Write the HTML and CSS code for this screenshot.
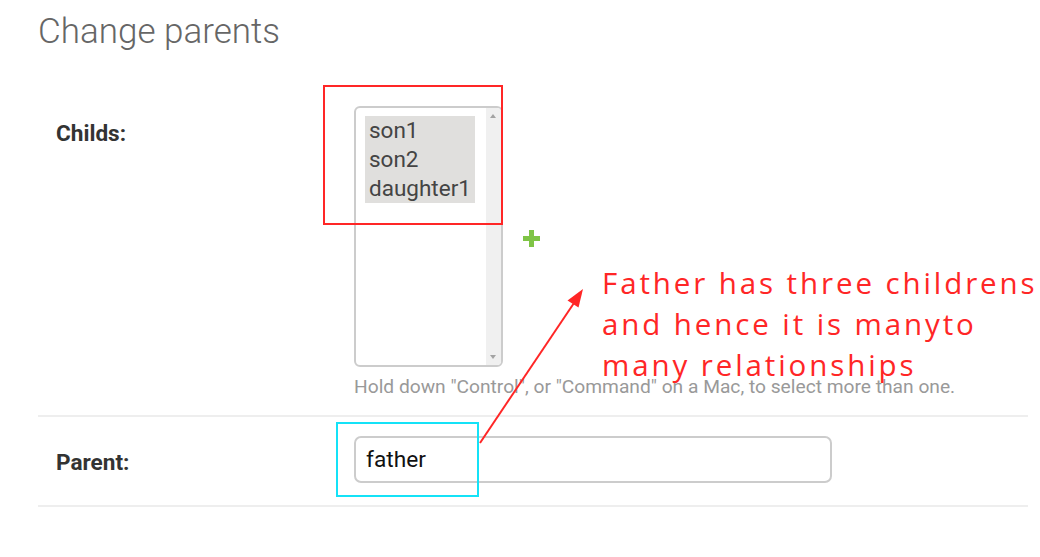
FILE: index.html
```html
<!DOCTYPE html>
<html>
<head>
<meta charset="utf-8">
<title>Change parents</title>
<link rel="stylesheet" href="styles.css">
</head>
<body>
<div class="page">
  <h1 class="title">Change parents</h1>
  <div class="form">
    <div class="form-row">
      <label class="row-label row-label-top">Childs:</label>
      <div class="field">
        <div class="field-line">
          <div class="select" role="listbox">
            <div class="options">
              <div class="opt-block">
                <div class="opt">son1</div>
                <div class="opt">son2</div>
                <div class="opt">daughter1</div>
              </div>
            </div>
            <div class="scrollbar">
              <span class="arrow-up"></span>
              <span class="arrow-down"></span>
            </div>
          </div>
          <span class="add-icon">
            <svg width="17" height="17" viewBox="0 0 17 17"><path d="M6 0h5v6h6v5h-6v6H6v-6H0V6h6z" fill="#7fc446"/></svg>
          </span>
        </div>
        <p class="help">Hold down "Control", or "Command" on a Mac, to select more than one.</p>
      </div>
    </div>
    <div class="form-row form-row-center">
      <label class="row-label">Parent:</label>
      <div class="field">
        <input class="text-input" type="text" value="father">
      </div>
    </div>
  </div>

  <svg class="marks" width="1040" height="557" viewBox="0 0 1040 557">
    <rect x="324" y="86" width="178" height="138" fill="none" stroke="#ff2626" stroke-width="2"/>
    <rect x="337" y="423" width="141" height="73" fill="none" stroke="#14e2f7" stroke-width="2"/>
    <line x1="480" y1="443" x2="574" y2="303" stroke="#ff2626" stroke-width="2"/>
    <polygon points="583,289 578.5,307.5 567.5,300.5" fill="#ff2626"/>
  </svg>
  <div class="note">
    <span class="note-line">Father has three childrens</span>
    <span class="note-line">and hence it is manyto</span>
    <span class="note-line">many relationships</span>
  </div>
</div>
</body>
</html>
```

FILE: styles.css
```css
* { box-sizing: border-box; }

html, body {
  margin: 0;
  padding: 0;
  background: #fff;
}

body {
  font-family: Roboto, "Liberation Sans", sans-serif;
  color: #333;
}

.page {
  position: relative;
  width: 1040px;
  height: 557px;
  overflow: hidden;
  padding-left: 38px;
}

.title {
  margin: 14px 0 0 0;
  font-weight: 300;
  font-size: 35px;
  line-height: 35px;
  color: #666;
}

.form {
  width: 990px;
  margin-top: 57px;
}

.form-row {
  display: flex;
  border-bottom: 2px solid #eee;
}

.form-row:first-child {
  padding-bottom: 17px;
}

.form-row-center {
  align-items: center;
  padding: 19px 0 22px 0;
}

.row-label {
  width: 316px;
  flex: none;
  padding-left: 18px;
  font-weight: 700;
  font-size: 22.6px;
  line-height: 28px;
  color: #333;
}

.row-label-top {
  margin-top: 14px;
}

.form-row-center .row-label {
  margin-top: 7px;
}

.field {
  display: flex;
  flex-direction: column;
}

.field-line {
  display: flex;
  align-items: center;
}

.select {
  width: 149px;
  height: 261px;
  border: 2px solid #ccc;
  border-radius: 6px;
  display: flex;
  overflow: hidden;
  background: #fff;
}

.options {
  flex: 1;
  padding: 8px 0 0 9px;
}

.opt-block {
  width: 110px;
  background: #e0dfdd;
}

.opt {
  font-size: 22.5px;
  line-height: 29px;
  padding-left: 4px;
  color: #444;
}

.scrollbar {
  width: 15px;
  flex: none;
  background: #f0f0f0;
  position: relative;
}

.arrow-up, .arrow-down {
  position: absolute;
  left: 4px;
  width: 0;
  height: 0;
  border-left: 3.5px solid transparent;
  border-right: 3.5px solid transparent;
}

.arrow-up {
  top: 6px;
  border-bottom: 4px solid #a3a3a3;
}

.arrow-down {
  bottom: 6px;
  border-top: 4px solid #a3a3a3;
}

.add-icon {
  display: inline-flex;
  margin-left: 20px;
  margin-top: 3px;
}

.help {
  margin: 9px 0 0 0;
  font-size: 19.2px;
  line-height: 22px;
  color: #999;
}

.text-input {
  width: 478px;
  height: 47px;
  border: 2px solid #ccc;
  border-radius: 7px;
  padding: 0 10px;
  font-family: Roboto, "Liberation Sans", sans-serif;
  font-size: 22.7px;
  color: #111;
  background: #fff;
  outline: none;
}

.marks {
  position: absolute;
  left: 0;
  top: 0;
  pointer-events: none;
}

.note {
  position: absolute;
  left: 602px;
  top: 262px;
  font-family: "Open Sans", sans-serif;
  font-size: 29.5px;
  line-height: 41px;
  letter-spacing: 2.9px;
  color: #ff2626;
  white-space: nowrap;
}

.note-line {
  display: block;
}
```
